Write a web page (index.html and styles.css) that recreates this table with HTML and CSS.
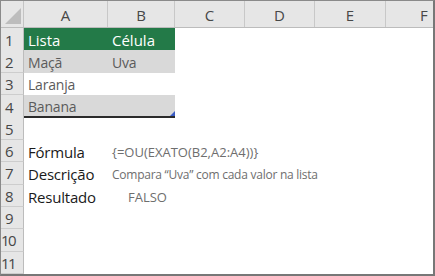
FILE: index.html
```html
<!DOCTYPE html>
<html>

<head>
    <meta http-equiv="content-type" content="text/html; charset=utf-8" />
    <title>OU EXATO</title>
    <link rel="stylesheet" href="styles.css">
</head>

<body>
    <div class="sheet">
        <!-- Cabeçalho das colunas -->
        <div class="row head">
            <div class="corner">
                <svg width="16" height="16" viewBox="0 0 16 16"><polygon points="16,0 16,16 0,16" fill="#bdbdbd" /></svg>
            </div>
            <div class="col">A</div>
            <div class="col">B</div>
            <div class="col">C</div>
            <div class="col">D</div>
            <div class="col">E</div>
            <div class="col last">F</div>
        </div>

        <div class="row">
            <div class="num">1</div>
            <div class="cell green">Lista</div>
            <div class="cell green">Célula</div>
        </div>
        <div class="row">
            <div class="num">2</div>
            <div class="cell band">Maçã</div>
            <div class="cell band">Uva</div>
        </div>
        <div class="row">
            <div class="num">3</div>
            <div class="cell">Laranja</div>
            <div class="cell"></div>
        </div>
        <div class="row">
            <div class="num">4</div>
            <div class="cell band bottom">Banana</div>
            <div class="cell band bottom handle"></div>
        </div>
        <div class="row">
            <div class="num">5</div>
        </div>
        <div class="row">
            <div class="num">6</div>
            <div class="cell label">Fórmula</div>
            <div class="cell value">{=OU(EXATO(B2,A2:A4))}</div>
        </div>
        <div class="row">
            <div class="num">7</div>
            <div class="cell label">Descrição</div>
            <div class="cell value small">Compara “Uva” com cada valor na lista</div>
        </div>
        <div class="row">
            <div class="num">8</div>
            <div class="cell label">Resultado</div>
            <div class="cell value indent">FALSO</div>
        </div>
        <div class="row">
            <div class="num">9</div>
        </div>
        <div class="row">
            <div class="num narrow">10</div>
        </div>
        <div class="row">
            <div class="num narrow">11</div>
        </div>
    </div>
</body>

</html>
```

FILE: styles.css
```css
body {
    margin: 0;
    font-family: "Open Sans", "Noto Sans", sans-serif;
    background: #fff;
}

.sheet {
    width: 435px;
    height: 276px;
    box-sizing: border-box;
    border-top: 1px solid #8a8a8a;
    border-left: 1px solid #8a8a8a;
    border-right: 2px solid #777;
    border-bottom: 2px solid #777;
    display: flex;
    flex-direction: column;
}

.row {
    display: grid;
    grid-template-columns: 23px 84px 67px 70px 70px 71px 1fr;
    flex: 1;
    min-height: 0;
}

/* Cabeçalho */
.row.head {
    flex: 0 0 26px;
    background: #e6e6e6;
    border-bottom: 1px solid #bcbcbc;
}

.corner {
    display: flex;
    align-items: flex-end;
    justify-content: flex-end;
    padding: 0 2px 3px 0;
    border-right: 1px solid #c4c4c4;
}

.col {
    display: flex;
    align-items: center;
    justify-content: center;
    padding-top: 2px;
    font-size: 15px;
    color: #474747;
    border-right: 1px solid #c8c8c8;
}

.col.last {
    border-right: none;
    justify-content: flex-start;
    padding-left: 34px;
}

.num {
    background: #e6e6e6;
    border-right: 1px solid #bcbcbc;
    border-bottom: 1px solid #cdcdcd;
    font-size: 15px;
    color: #474747;
    display: flex;
    align-items: center;
    padding-left: 4px;
    padding-top: 1px;
}

.num.narrow {
    padding-left: 0;
    letter-spacing: -1.5px;
}

/* Células */
.cell {
    position: relative;
    display: flex;
    align-items: center;
    padding: 2px 0 0 4px;
    font-size: 14px;
    letter-spacing: -0.2px;
    color: #5b5b5b;
    white-space: nowrap;
}

.cell.green {
    background: #237a48;
    color: #fff;
    font-size: 15px;
    letter-spacing: 0;
    border-bottom: 1px solid #1d2b22;
}

.cell.band {
    background: #d9d9d9;
}

.cell.bottom {
    border-bottom: 2px solid #2b2b2b;
}

.cell.handle::after {
    content: "";
    position: absolute;
    right: 0;
    bottom: 0;
    width: 0;
    height: 0;
    border-left: 5px solid transparent;
    border-bottom: 5px solid #3b5cc4;
}

.cell.label {
    color: #1a1a1a;
    font-size: 15px;
    letter-spacing: -0.2px;
}

.cell.value {
    grid-column: span 5;
    font-size: 13px;
    letter-spacing: 0;
    color: #6e6e6e;
}

.cell.value.small {
    font-size: 12px;
    letter-spacing: -0.25px;
}

.cell.indent {
    padding-left: 20px;
}
```
